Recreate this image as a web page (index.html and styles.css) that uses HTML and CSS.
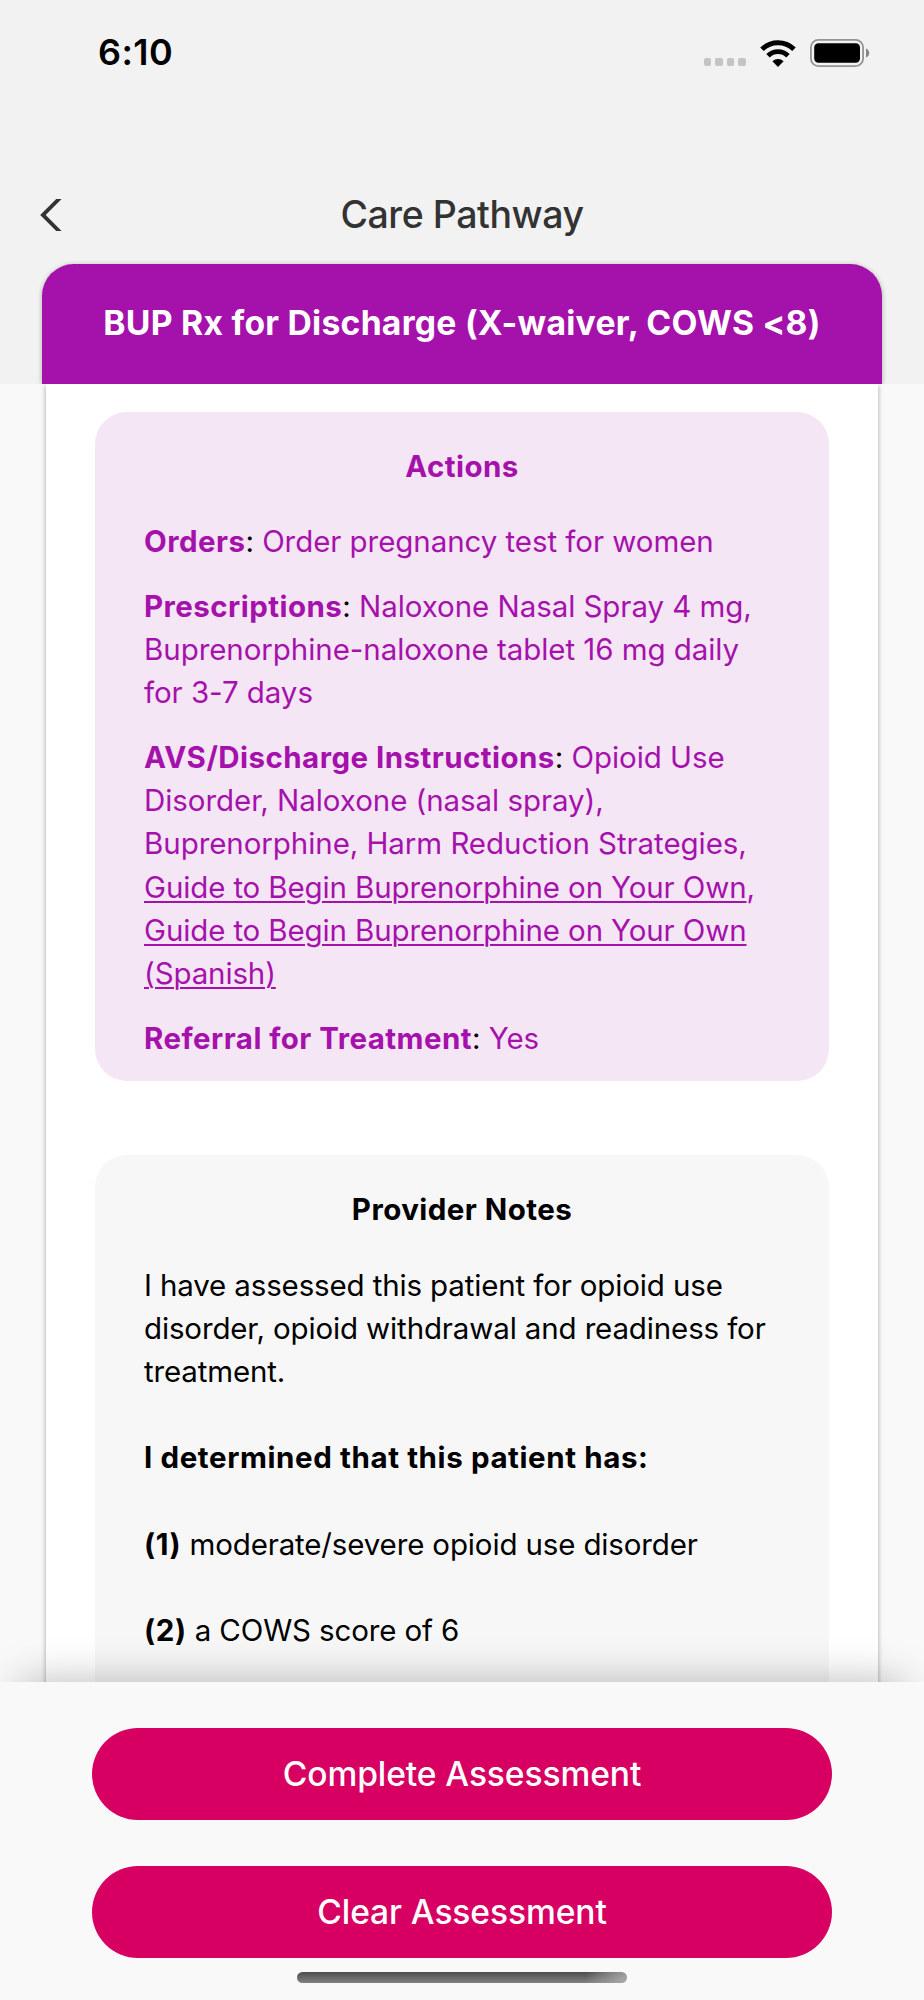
FILE: index.html
```
<!DOCTYPE html>
<html lang="en">
<head>
    <meta charset="UTF-8">
    <meta name="viewport" content="width=device-width, initial-scale=1.0">
    <title>Care Pathway</title>
    <link rel="stylesheet" href="styles.css">
</head>
<body>
    <div class="screen">
        <header class="header">
            <div class="status-bar">
                <span class="time">6:10</span>
                <div class="status-icons">
                    <div class="signal"><i></i><i></i><i></i><i></i></div>
                    <svg class="wifi" width="36" height="27" viewBox="0 0 36 27">
                        <path d="M2 9.3 A22.8 22.8 0 0 1 34 9.3" fill="none" stroke="#000" stroke-width="5"/>
                        <path d="M8 15.8 A14 14 0 0 1 28 15.8" fill="none" stroke="#000" stroke-width="4.8"/>
                        <path d="M18 27 L12.4 21.2 A8 8 0 0 1 23.6 21.2 Z" fill="#000"/>
                    </svg>
                    <svg class="battery" width="60" height="28" viewBox="0 0 60 28">
                        <rect x="0.9" y="0.9" width="52.2" height="26.2" rx="7.5" fill="none" stroke="#949494" stroke-width="1.8"/>
                        <rect x="4.2" y="4.2" width="45.8" height="19.6" rx="4.2" fill="#000"/>
                        <path d="M56 9.5 Q59.2 11 59.2 14 Q59.2 17 56 18.5 Z" fill="#868686"/>
                    </svg>
                </div>
            </div>
            <nav class="nav">
                <button class="back" aria-label="Back">
                    <svg width="22" height="32" viewBox="0 0 22 32">
                        <path d="M21.6 0 H16.2 L0.2 16 L16.2 32 H21.6 L5.7 16 Z" fill="#333"/>
                    </svg>
                </button>
                <h1>Care Pathway</h1>
            </nav>
            <div class="banner">BUP Rx for Discharge (X-waiver, COWS &lt;8)</div>
        </header>

        <main class="content">
            <div class="card">
                <section class="box actions">
                    <h2>Actions</h2>
                    <p><b>Orders</b><span class="colon">:</span> Order pregnancy test for women</p>
                    <p><b>Prescriptions</b><span class="colon">:</span> Naloxone Nasal Spray 4 mg,<br>
                        Buprenorphine-naloxone tablet 16 mg daily<br>
                        for 3-7 days</p>
                    <p><b>AVS/Discharge Instructions</b><span class="colon">:</span> Opioid Use<br>
                        Disorder, Naloxone (nasal spray),<br>
                        Buprenorphine, Harm Reduction Strategies,<br>
                        <a href="#">Guide to Begin Buprenorphine on Your Own</a>,<br>
                        <a href="#">Guide to Begin Buprenorphine on Your Own<br>
                        (Spanish)</a></p>
                    <p><b>Referral for Treatment</b><span class="colon">:</span> Yes</p>
                </section>
                <section class="box notes">
                    <h2>Provider Notes</h2>
                    <p>I have assessed this patient for opioid use<br>
                        disorder, opioid withdrawal and readiness for<br>
                        treatment.</p>
                    <p><b>I determined that this patient has:</b></p>
                    <p><b>(1)</b> moderate/severe opioid use disorder</p>
                    <p><b>(2)</b> a COWS score of 6</p>
                </section>
            </div>
        </main>

        <footer class="footer">
            <button class="btn">Complete Assessment</button>
            <button class="btn">Clear Assessment</button>
            <div class="home-indicator"></div>
        </footer>
    </div>
</body>
</html>
```
FILE: styles.css
```
* {
    box-sizing: border-box;
}
body {
    margin: 0;
    font-family: Inter, "Liberation Sans", sans-serif;
    color: #000;
}
h1, h2, p {
    margin: 0;
}
button {
    border: 0;
    padding: 0;
    font-family: inherit;
}
.screen {
    width: 924px;
    height: 2000px;
    display: flex;
    flex-direction: column;
    overflow: hidden;
    background-color: #f9f9f9;
}

/* header */
.header {
    flex: none;
    height: 384px;
    background-color: #f2f2f2;
    overflow: hidden;
}
.status-bar {
    height: 106px;
    padding: 0 54px 0 98px;
    display: flex;
    align-items: center;
    justify-content: space-between;
}
.time {
    padding-bottom: 2px;
    font-size: 36px;
    font-weight: 600;
    letter-spacing: 0.4px;
}
.status-icons {
    display: flex;
    align-items: flex-end;
}
.signal {
    display: flex;
    gap: 4px;
    margin-right: 14px;
    padding-bottom: 1px;
}
.signal i {
    width: 7.6px;
    height: 8px;
    border-radius: 2px;
    background-color: #c4c4c4;
}
.wifi {
    margin-right: 14px;
}
.nav {
    height: 98px;
    margin-top: 60px;
    display: grid;
    grid-template-columns: 120px 1fr 120px;
    align-items: center;
}
.back {
    height: 32px;
    padding-left: 40px;
    background: none;
    text-align: left;
}
.back svg {
    display: block;
}
.nav h1 {
    padding-bottom: 2px;
    font-size: 37.5px;
    font-weight: 500;
    letter-spacing: -0.45px;
    text-align: center;
    color: #333;
}
.banner {
    height: 120px;
    margin: 0 42px;
    border-radius: 32px 32px 0 0;
    background-color: #a511ab;
    box-shadow: 0 1px 5px rgba(0, 0, 0, 0.3);
    color: #fff;
    font-size: 33.7px;
    font-weight: 700;
    letter-spacing: 0.25px;
    line-height: 118px;
    text-align: center;
    white-space: nowrap;
}

/* scrolling card */
.content {
    flex: 1;
    min-height: 0;
    overflow: hidden;
}
.card {
    margin: 0 46px;
    padding: 28px 49px 0;
    background-color: #fff;
    box-shadow: 0 2px 5px rgba(0, 0, 0, 0.35);
}
.box {
    padding: 32.6px 49px 0;
    border-radius: 32px;
    font-size: 29.5px;
    line-height: 43.2px;
    letter-spacing: -0.06px;
    white-space: nowrap;
}
.box h2 {
    margin-bottom: 32.2px;
    font-size: inherit;
    font-weight: 700;
    letter-spacing: 0.45px;
    text-align: center;
}
.box b {
    font-weight: 700;
    letter-spacing: 0.45px;
}
.actions {
    height: 669px;
    background-color: #f5e6f6;
    color: #a511ab;
}
.actions p {
    margin-bottom: 21.6px;
}
.actions a {
    color: inherit;
    letter-spacing: -0.13px;
    text-decoration-thickness: 2px;
    text-underline-offset: 3px;
}
.colon {
    color: #000;
}
.notes {
    height: 700px;
    margin-top: 74px;
    padding-top: 33.2px;
    background-color: #f7f7f7;
    letter-spacing: -0.14px;
}
.notes p {
    margin-bottom: 43.2px;
}
.notes b {
    letter-spacing: 0.6px;
}

/* bottom actions */
.footer {
    flex: none;
    height: 318px;
    padding-top: 46px;
    display: flex;
    flex-direction: column;
    align-items: center;
    position: relative;
    background-color: #f9f9f9;
    box-shadow: 0 -20px 40px -20px rgba(0, 0, 0, 0.28);
}
.btn {
    width: 740px;
    height: 92px;
    margin-bottom: 46px;
    padding-bottom: 2px;
    border-radius: 46px;
    background-color: #d70062;
    color: #fff;
    font-size: 33.6px;
    font-weight: 500;
    letter-spacing: -0.1px;
}
.home-indicator {
    width: 330px;
    height: 11px;
    margin-top: -32px;
    border-radius: 6px;
    background: radial-gradient(circle at 100% 100%, #aaa 0, rgba(170, 170, 170, 0) 42px), linear-gradient(#4d4d4d, #828282);
}
```
